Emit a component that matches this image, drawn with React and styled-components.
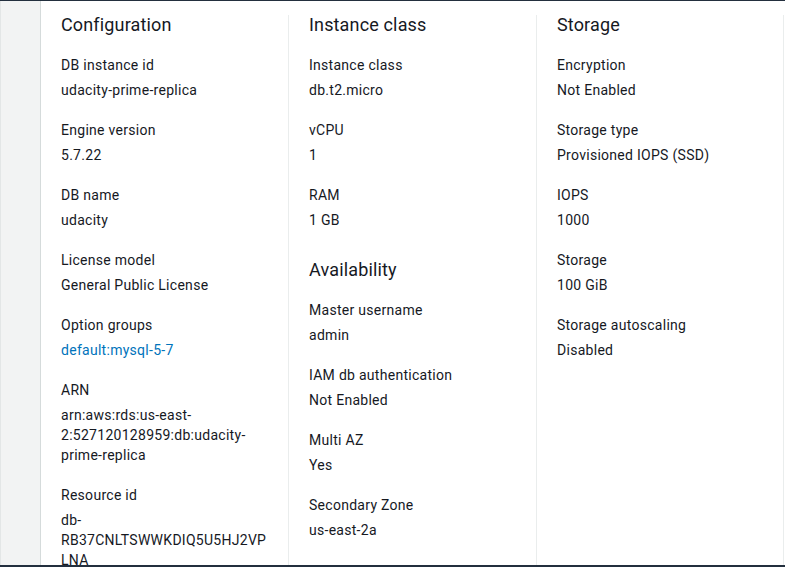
import React from 'react';
import styled, { createGlobalStyle } from 'styled-components';

const GlobalStyle = createGlobalStyle`
  html, body {
    margin: 0;
    padding: 0;
    background: #ffffff;
  }
  body {
    font-family: Roboto, "Liberation Sans", Arial, sans-serif;
    color: #16191f;
  }
`;

const columns = [
  [
    {
      title: 'Configuration',
      fields: [
        { label: 'DB instance id', value: 'udacity-prime-replica' },
        { label: 'Engine version', value: '5.7.22' },
        { label: 'DB name', value: 'udacity' },
        { label: 'License model', value: 'General Public License' },
        { label: 'Option groups', value: 'default:mysql-5-7', link: true },
        { label: 'ARN', value: 'arn:aws:rds:us-east-2:527120128959:db:udacity-prime-replica' },
        { label: 'Resource id', value: 'db-RB37CNLTSWWKDIQ5U5HJ2VPLNA' },
      ],
    },
  ],
  [
    {
      title: 'Instance class',
      fields: [
        { label: 'Instance class', value: 'db.t2.micro' },
        { label: 'vCPU', value: '1' },
        { label: 'RAM', value: '1 GB' },
      ],
    },
    {
      title: 'Availability',
      fields: [
        { label: 'Master username', value: 'admin' },
        { label: 'IAM db authentication', value: 'Not Enabled' },
        { label: 'Multi AZ', value: 'Yes' },
        { label: 'Secondary Zone', value: 'us-east-2a' },
      ],
    },
  ],
  [
    {
      title: 'Storage',
      fields: [
        { label: 'Encryption', value: 'Not Enabled' },
        { label: 'Storage type', value: 'Provisioned IOPS (SSD)' },
        { label: 'IOPS', value: '1000' },
        { label: 'Storage', value: '100 GiB' },
        { label: 'Storage autoscaling', value: 'Disabled' },
      ],
    },
  ],
  [],
];

function App() {
  return (
    <>
      <GlobalStyle />
      <Frame>
        <SideRail />
        <Details>
          {columns.map((sections, i) => (
            <Column key={i} divided={i > 0}>
              {sections.map((section) => (
                <Section key={section.title}>
                  <Heading>{section.title}</Heading>
                  {section.fields.map((field) => (
                    <Field key={field.label}>
                      <Label>{field.label}</Label>
                      {field.link ? (
                        <Link href="#">{field.value}</Link>
                      ) : (
                        <Value>{field.value}</Value>
                      )}
                    </Field>
                  ))}
                </Section>
              ))}
            </Column>
          ))}
        </Details>
      </Frame>
    </>
  );
}

export default App;

const Frame = styled.div`
  width: 785px;
  height: 567px;
  box-sizing: border-box;
  display: flex;
  overflow: hidden;
  border-top: 1px solid #232f3e;
  border-bottom: 2px solid #232f3e;
  background: #ffffff;
`;

const SideRail = styled.div`
  flex: 0 0 41px;
  box-sizing: border-box;
  background: #f2f3f3;
  border-left: 1px solid #e3e6e6;
  border-right: 1px solid #d5dbdb;
`;

const Details = styled.div`
  display: grid;
  grid-template-columns: 247px 248px 247px 247px;
  align-items: stretch;
  padding-top: 14px;
`;

const Column = styled.div`
  box-sizing: border-box;
  padding: 0 20px;
  border-left: ${(p) => (p.divided ? '1px solid #eaeded' : 'none')};
  display: flex;
  flex-direction: column;
`;

const Section = styled.section`
  & + & {
    margin-top: 10px;
  }
`;

const Heading = styled.h2`
  margin: 0 0 20px;
  font-size: 18px;
  line-height: 20px;
  font-weight: 400;
  letter-spacing: 0.15px;
  color: #16191f;
`;

const Field = styled.div`
  margin-bottom: 20px;
  font-size: 14px;
  line-height: 20px;
  letter-spacing: 0.28px;
`;

const Label = styled.div`
  color: #16191f;
  margin-bottom: 5px;
`;

const Value = styled.div`
  color: #16191f;
  overflow-wrap: anywhere;
`;

const Link = styled.a`
  display: block;
  color: #0073bb;
  text-decoration: none;
`;
